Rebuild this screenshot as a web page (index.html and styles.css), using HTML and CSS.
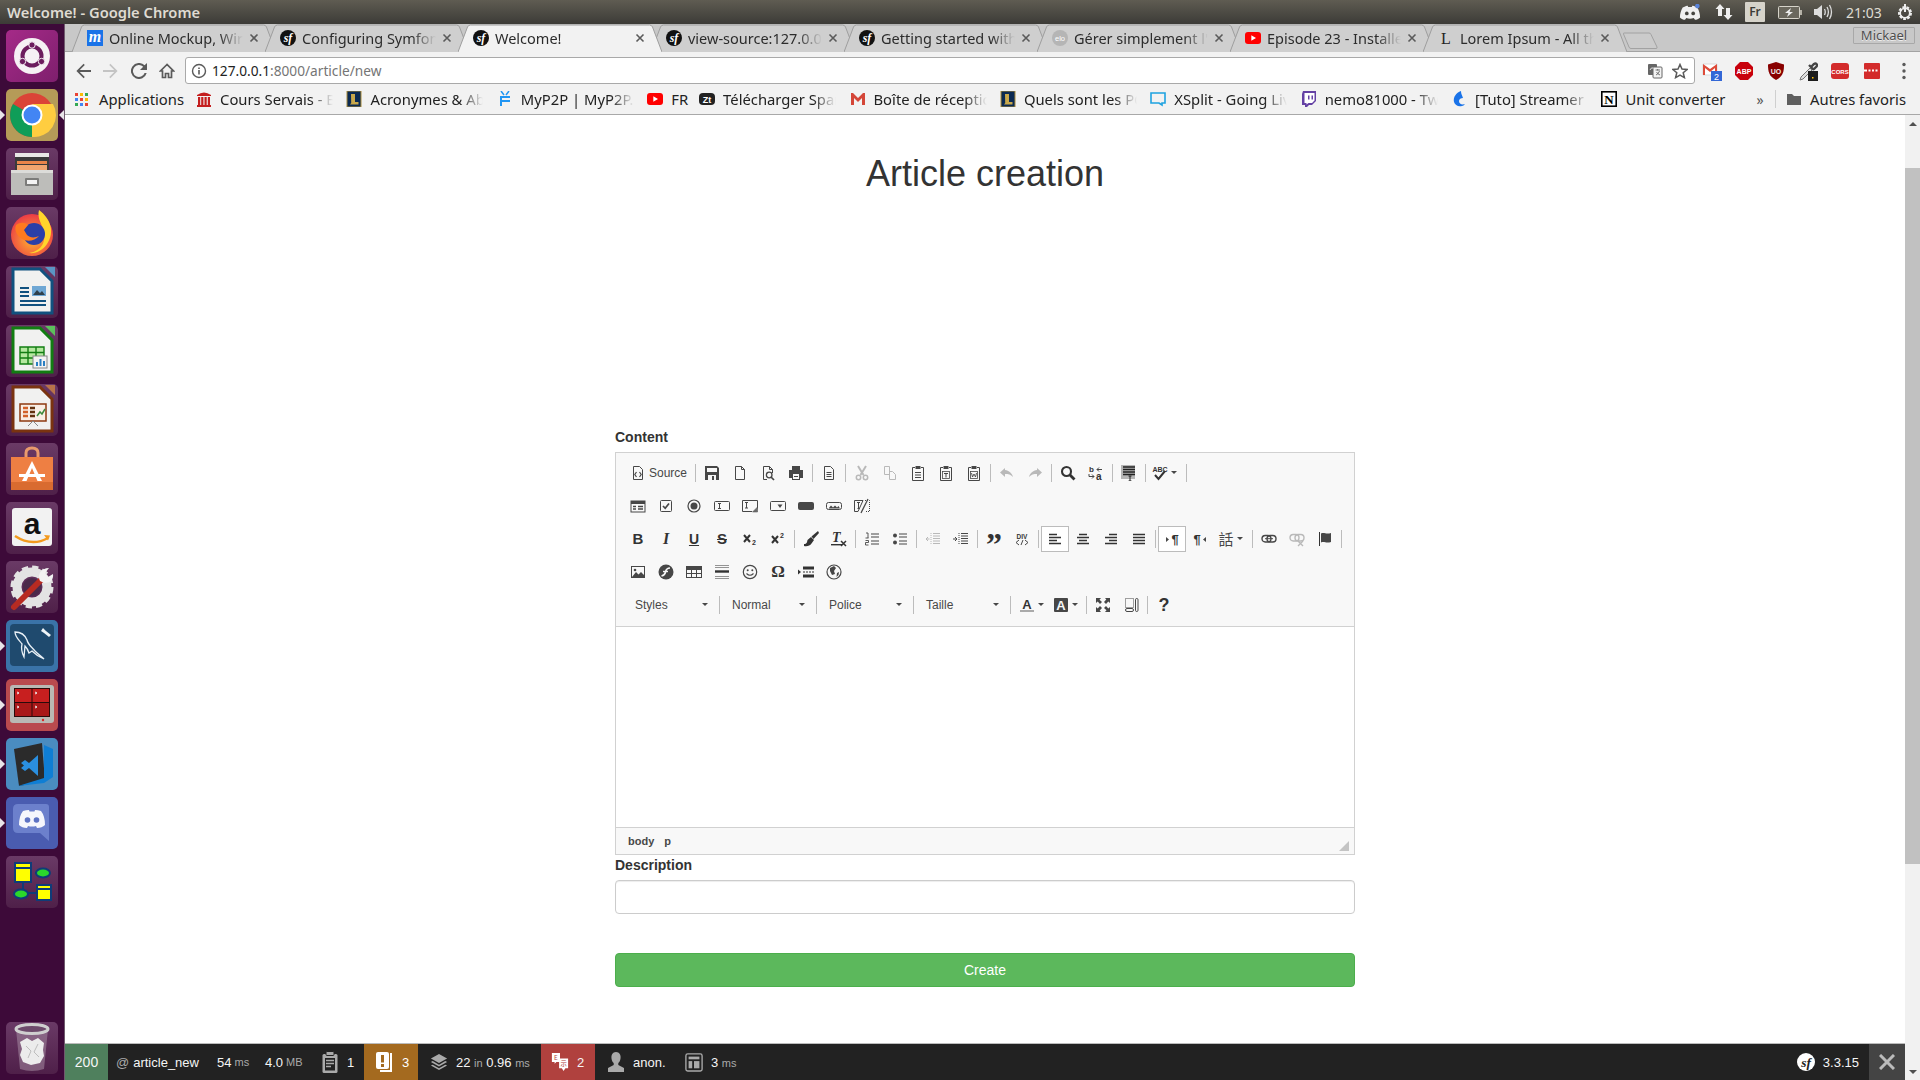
FILE: index.html
```html
<!DOCTYPE html>
<html lang="fr">
<head>
<meta charset="utf-8">
<title>Welcome!</title>
<link rel="stylesheet" href="styles.css">
</head>
<body>
<svg class="defs" aria-hidden="true">
  <symbol id="yt" viewBox="0 0 16 16"><rect x="0" y="2" width="16" height="12" rx="3" fill="#f00"/><path d="M6.3 5.2 11 8l-4.7 2.8z" fill="#fff"/></symbol>
  <symbol id="lol" viewBox="0 0 16 16"><rect x="1" y="0" width="14" height="16" fill="#0b2a52" stroke="#a78a3a"/><path d="M5 3h4v8h3.5v2.5H4l1.2-1.5z" fill="#c8a84b"/></symbol>
  <symbol id="x" viewBox="0 0 10 10"><path d="M1.5 1.5l7 7m0-7l-7 7" stroke="#5a5a5a" stroke-width="1.6" fill="none"/></symbol>
  <symbol id="tabshape" viewBox="0 0 204 28" preserveAspectRatio="none"><path d="M0 28 9.5 3Q10.3 1 12.5 1H191.500Q193.700 1 194.500 3L204 28"/></symbol>
</svg>
<div class="desktop">

  <header class="titlebar">
    <div class="win-title">Welcome! - Google Chrome</div>
    <div class="indicators">
      <svg class="ind ind-discord" viewBox="0 0 24 18"><path fill="#f0f0f0" d="M4 3.5C7 1.800 9 1.500 9.500 1.500L10 3h4l.5-1.500c.5 0 2.500.3 5.500 2 1.800 3 3 7 3 11-1.500 1.500-4 2.500-5.500 2.500L16 15c-2.500 1-5.500 1-8 0l-1.500 2C5 17 2.500 16 1 14.500c0-4 1.200-8 3-11z"/><circle cx="8.5" cy="10" r="2" fill="#45443f"/><circle cx="15.5" cy="10" r="2" fill="#45443f"/><circle cx="20" cy="2" r="2.5" fill="#5a83d8"/></svg>
      <svg class="ind ind-net" viewBox="0 0 18 18"><path fill="#eee" d="M5 1 0.5 6H3v7h4V6h2.500zM13 17l4.500-5H15V5h-4v7H8.500z"/></svg>
      <span class="ind-lang">Fr</span>
      <svg class="ind ind-batt" viewBox="0 0 24 13"><rect x=".5" y=".5" width="21" height="12" rx="1" fill="#6a675d" stroke="#d6d3ca"/><rect x="22" y="4" width="2" height="5" fill="#b5b2a8"/><path d="M13 2 7 7h3.500L9 11l6-5h-3.500z" fill="#eee"/></svg>
      <svg class="ind ind-vol" viewBox="0 0 20 18"><path fill="#ddd" d="M0 6h3l5-4v14l-5-4H0z"/><path fill="none" stroke="#ddd" stroke-width="1.3" d="M10.5 6q1.500 3 0 6M13 4q2.800 5 0 10M15.500 2q4 7 0 14"/></svg>
      <span class="clock">21:03</span>
      <svg class="ind ind-gear" viewBox="0 0 18 18"><circle cx="9" cy="10" r="5.5" fill="none" stroke="#eee" stroke-width="3" stroke-dasharray="2.5 1.3"/><circle cx="9" cy="10" r="4.8" fill="none" stroke="#eee" stroke-width="1.6"/><path d="M9 1v8" stroke="#eee" stroke-width="2"/></svg>
    </div>
  </header>

  <div class="workspace">
    <nav class="launcher">
      <div class="tile tile-ubuntu"><svg viewBox="0 0 52 52"><circle cx="26" cy="26" r="18" fill="#f6f0f4"/><circle cx="26" cy="26" r="9.5" fill="none" stroke="#6d1c5e" stroke-width="4"/><circle cx="26" cy="15" r="3.2" fill="#6d1c5e" stroke="#f6f0f4"/><circle cx="16.5" cy="31.500" r="3.2" fill="#6d1c5e" stroke="#f6f0f4"/><circle cx="35.5" cy="31.500" r="3.2" fill="#6d1c5e" stroke="#f6f0f4"/></svg></div>
      <div class="tile tile-chrome running active"><svg viewBox="0 0 52 52"><circle cx="26" cy="26" r="22" fill="#db4437"/><path d="M26 26 7 15A22 22 0 0 0 26 48z" fill="#0f9d58"/><path d="M26 26H48A22 22 0 0 1 26 48z" fill="#ffcd40"/><path d="M26 15H47A22 22 0 0 1 26 48L36 30z" fill="#ffcd40"/><circle cx="26" cy="26" r="10.5" fill="#fff"/><circle cx="26" cy="26" r="8.5" fill="#4285f4"/></svg></div>
      <div class="tile tile-plain"><svg viewBox="0 0 52 52"><path d="M9 5h34v8H9z" fill="#e8e8e6"/><rect x="9" y="9" width="34" height="14" fill="#3a3a3a"/><rect x="11" y="13" width="30" height="3" fill="#e8844a"/><rect x="11" y="17" width="30" height="5" fill="#f0a56f"/><rect x="5" y="22" width="42" height="25" fill="#bdbdba"/><rect x="5" y="22" width="42" height="3" fill="#dcdcd9"/><rect x="19" y="30" width="14" height="8" rx="1" fill="#7c7c7a"/><rect x="21" y="32" width="10" height="4" fill="#f3f3f3"/></svg></div>
      <div class="tile tile-plain"><svg viewBox="0 0 52 52"><defs><radialGradient id="ffg" cx=".5" cy=".6" r=".7"><stop offset="0" stop-color="#ffb52e"/><stop offset="1" stop-color="#e8264a"/></radialGradient></defs><circle cx="26" cy="28" r="21" fill="url(#ffg)"/><path d="M33 3c12 9 16 22 8 34-4 6-11 10-18 9 13-2 18-12 14-24-2-7-6-11-4-19z" fill="#ffd52c"/><circle cx="28" cy="27" r="11" fill="#2b3fa8"/><path d="M10 18c4-3 9-3 12 0l-4 5 3 5c3 3 8 3 12 1-4 5-12 6-17 3-5-3-8-9-6-14z" fill="#ff7a1f"/></svg></div>
      <div class="tile tile-plain"><svg viewBox="0 0 52 52"><path d="M39 1h10v10z" fill="#5b95c4"/><path d="M7 3h27l12 12v32H7z" fill="#f1f1f0" stroke="#11517f" stroke-width="3"/><path d="M14 22h9M14 26h9M14 30h9M14 35h26M14 39h26" stroke="#11517f" stroke-width="2.2"/><rect x="26" y="20" width="14" height="10" fill="#6fa7d4"/><path d="M27 29l4-5 3 3 2-2 3 4z" fill="#2f3f4a"/></svg></div>
      <div class="tile tile-plain"><svg viewBox="0 0 52 52"><path d="M39 1h10v10z" fill="#5cc05c"/><path d="M7 3h27l12 12v32H7z" fill="#f1f1f0" stroke="#127d12" stroke-width="3"/><path d="M14 22h24v17H14zM14 27.500h24M14 33h24M22 22v17M30 22v17" fill="#b5e8a0" stroke="#127d12" stroke-width="1.4"/><rect x="27" y="31" width="14" height="12" fill="#f3f3f3" stroke="#888"/><path d="M30 41v-4h2v4zM33.500 41v-7h2v7zM37 41v-5h2v5z" fill="#2a7fc2"/></svg></div>
      <div class="tile tile-plain"><svg viewBox="0 0 52 52"><path d="M39 1h10v10z" fill="#b8734a"/><path d="M7 3h27l12 12v32H7z" fill="#f1f1f0" stroke="#7a3310" stroke-width="3"/><rect x="14" y="20" width="26" height="17" fill="#f9efe6" stroke="#8d3a10" stroke-width="1.5"/><path d="M17 24h5M17 28h5M17 32h5" stroke="#d2622a" stroke-width="2.5"/><path d="M24 24h5M24 28h5M24 32h5" stroke="#62310f" stroke-width="2.5"/><path d="M31 32l3-4 2 2 3-5" stroke="#3d8b3d" stroke-width="1.5" fill="none"/><path d="M27 37l-5 5M27 37l5 5" stroke="#888"/></svg></div>
      <div class="tile tile-plain"><svg viewBox="0 0 52 52"><path d="M20 14V10q0-5 6-5t6 5v4" fill="none" stroke="#e89a6d" stroke-width="3"/><path d="M5 14h42v33H5z" fill="#ee7f43"/><path d="M5 39h42v8H5z" fill="#d96b30"/><path d="M26 18 16 38h4.500l5.500-13 5.500 13H36z" fill="#fff"/><rect x="13" y="31" width="26" height="3" fill="#fff"/></svg></div>
      <div class="tile tile-plain"><svg viewBox="0 0 52 52"><rect x="6" y="6" width="40" height="38" rx="3" fill="#f2f2f2"/><text x="26" y="32" text-anchor="middle" class="az">a</text><path d="M9 34q17 11 33 2" fill="none" stroke="#f39a1e" stroke-width="2.5"/><path d="M38 33l6 .5-2 5z" fill="#f39a1e"/></svg></div>
      <div class="tile tile-plain"><svg viewBox="0 0 52 52"><circle cx="26" cy="26" r="15" fill="none" stroke="#e3e3e3" stroke-width="9"/><circle cx="26" cy="26" r="19" fill="none" stroke="#e3e3e3" stroke-width="5" stroke-dasharray="6 3.9"/><circle cx="26" cy="26" r="9" fill="#4b2a4a"/><path d="M8 46 37 17" stroke="#b72b22" stroke-width="6" stroke-linecap="round"/><path d="M34 20c-3-6 1-13 9-13l-4 5 3 4 5-3c1 8-6 11-13 7z" fill="#f2f2f2"/></svg></div>
      <div class="tile tile-mysql running"><svg viewBox="0 0 52 52"><rect x="4" y="4" width="44" height="42" rx="4" fill="#1f4a6e"/><path d="M9 12c6 0 10 3 12 8 1 5 5 7 8 11 3 3 6 5 9 8-5-2-9-5-12-8l-3 2c-1-3-2-5-4-7l-1 11c-2-4-3-9-2-13-3-4-7-7-7-12z" fill="none" stroke="#e8f0f6" stroke-width="1.3"/><path d="M37 8l3 3 5 4-2 2-5-4-3-2z" fill="#eef4f8"/></svg></div>
      <div class="tile tile-terminal running"><svg viewBox="0 0 52 52"><rect x="4" y="6" width="44" height="38" rx="3" fill="#b9b9b4"/><rect x="8" y="9" width="36" height="29" fill="#2a0b0b"/><rect x="9" y="10" width="16.5" height="13" fill="#c81f1f"/><rect x="26.5" y="10" width="16.5" height="13" fill="#c81f1f"/><rect x="9" y="24" width="16.5" height="13" fill="#a91818"/><rect x="26.5" y="24" width="16.5" height="13" fill="#a91818"/><path d="M11 13l2 1-2 1M29 13l2 1-2 1M11 27l2 1-2 1M29 27l2 1-2 1" stroke="#eee" fill="none"/><circle cx="37" cy="41" r="1.2" fill="#d22"/></svg></div>
      <div class="tile tile-vscode running"><svg viewBox="0 0 52 52"><path d="M8 11 36 5l3 38-26 5z" fill="#2b2b2b"/><path d="M38 7l9 4v28l-9 6-26 3 26-8z" fill="#0f7ed4"/><path d="M15 25l4-3 4 3 9-8v21l-9-8-4 3-4-3 3-2.500z" fill="#2a8fe0"/></svg></div>
      <div class="tile tile-discord running"><svg viewBox="0 0 52 52"><path d="M12 7h28q3 0 3 3v34L34 36H12q-5 0-5-5V12q0-5 5-5z" fill="#6c80cc"/><path d="M17 14q3-1 6-1l.5 1.500h5L29 13q3 0 6 1 4 5 4 14-3 3-8 3l-1-2q-4 1-8 0l-1 2q-5 0-8-3 0-9 4-14z" fill="#f5f6fc"/><circle cx="21.5" cy="23" r="2.8" fill="#5d72c3"/><circle cx="30.5" cy="23" r="2.8" fill="#5d72c3"/></svg></div>
      <div class="tile tile-plain"><svg viewBox="0 0 52 52"><path d="M17 22v12M29 17h6M35 37H22" stroke="#0f3c78" stroke-width="2"/><rect x="9" y="7" width="16" height="19" fill="#ff0" stroke="#0f3c78" stroke-width="2"/><path d="M9 12h16" stroke="#0f3c78" stroke-width="2"/><ellipse cx="37" cy="17" rx="7" ry="4.5" fill="#2bd82b" stroke="#0f3c78" stroke-width="2"/><ellipse cx="15" cy="38" rx="7" ry="4.5" fill="#2bd82b" stroke="#0f3c78" stroke-width="2"/><rect x="31" y="29" width="14" height="15" fill="#ff0" stroke="#0f3c78" stroke-width="2"/><path d="M31 33h14" stroke="#0f3c78" stroke-width="2"/></svg></div>
      <div class="tile tile-plain tile-trash"><svg viewBox="0 0 52 52"><path d="M10 7l4 40q12 4 24 0l4-40q-16 6-32 0z" fill="#a58ca3" fill-opacity=".55"/><ellipse cx="26" cy="7" rx="16" ry="4.5" fill="#6d4a6b" stroke="#cfcfcf" stroke-width="3"/><path d="M14 20l7-4 5 3 6-3 6 5-1 7 1 6-4 7-9 2-8-3-3-7 2-6z" fill="#ececec"/><path d="M20 24l5 5-3 7M32 22l-4 8 5 5" fill="none" stroke="#bdbdbd"/></svg></div>
    </nav>

    <main class="browser">
      <div class="tabstrip">
        <div class="tab"><svg class="tab-shape"><use href="#tabshape"/></svg><svg class="fav" viewBox="0 0 16 16"><rect width="16" height="16" fill="#1a73e8"/><text x="8" y="12" text-anchor="middle" class="mock-text" fill="#fff">m</text></svg><span class="tab-title">Online Mockup, Wireframe</span><svg class="tab-x"><use href="#x"/></svg></div>
        <div class="tab"><svg class="tab-shape"><use href="#tabshape"/></svg><svg class="fav" viewBox="0 0 16 16"><circle cx="8" cy="8" r="8" fill="#111"/><text x="8" y="12" text-anchor="middle" class="sf-text" fill="#fff">sf</text></svg><span class="tab-title">Configuring Symfony</span><svg class="tab-x"><use href="#x"/></svg></div>
        <div class="tab tab-active"><svg class="tab-shape"><use href="#tabshape"/></svg><svg class="fav" viewBox="0 0 16 16"><circle cx="8" cy="8" r="8" fill="#111"/><text x="8" y="12" text-anchor="middle" class="sf-text" fill="#fff">sf</text></svg><span class="tab-title">Welcome!</span><svg class="tab-x"><use href="#x"/></svg></div>
        <div class="tab"><svg class="tab-shape"><use href="#tabshape"/></svg><svg class="fav" viewBox="0 0 16 16"><circle cx="8" cy="8" r="8" fill="#111"/><text x="8" y="12" text-anchor="middle" class="sf-text" fill="#fff">sf</text></svg><span class="tab-title">view-source:127.0.0.1:8000</span><svg class="tab-x"><use href="#x"/></svg></div>
        <div class="tab"><svg class="tab-shape"><use href="#tabshape"/></svg><svg class="fav" viewBox="0 0 16 16"><circle cx="8" cy="8" r="8" fill="#111"/><text x="8" y="12" text-anchor="middle" class="sf-text" fill="#fff">sf</text></svg><span class="tab-title">Getting started with CKE</span><svg class="tab-x"><use href="#x"/></svg></div>
        <div class="tab"><svg class="tab-shape"><use href="#tabshape"/></svg><svg class="fav" viewBox="0 0 16 16"><circle cx="8" cy="8" r="8" fill="#b5b5b5"/><text x="8" y="11" text-anchor="middle" class="elo-text" fill="#fff">elo</text></svg><span class="tab-title">Gérer simplement l'upload</span><svg class="tab-x"><use href="#x"/></svg></div>
        <div class="tab"><svg class="tab-shape"><use href="#tabshape"/></svg><svg class="fav"><use href="#yt"/></svg><span class="tab-title">Episode 23 - Installer</span><svg class="tab-x"><use href="#x"/></svg></div>
        <div class="tab"><svg class="tab-shape"><use href="#tabshape"/></svg><svg class="fav" viewBox="0 0 16 16"><text x="8" y="14" text-anchor="middle" class="lorem-text" fill="#222">L</text></svg><span class="tab-title">Lorem Ipsum - All the facts</span><svg class="tab-x"><use href="#x"/></svg></div>
        <svg class="newtab" viewBox="0 0 35 17"><path d="M1 1h25q1.500 0 2 1.500L34 15q.5 1.500-1 1.500H8q-1.500 0-2-1.500L.5 2Q.2 1 1 1z" fill="#cbcbcb" stroke="#a2a2a2"/></svg>
        <div class="profile">Mickael</div>
      </div>

      <div class="toolbar">
        <button class="nav-btn"><svg viewBox="0 0 16 16"><path fill="#5a5a5a" d="M16 7H4.800l5-5L8.600.8 1.400 8l7.200 7.200 1.200-1.200-5-5H16z"/></svg></button>
        <button class="nav-btn"><svg viewBox="0 0 16 16"><path fill="#c4c4c4" d="M0 7h11.200l-5-5L7.400.8 14.600 8l-7.200 7.200L6.200 14l5-5H0z"/></svg></button>
        <button class="nav-btn"><svg viewBox="0 0 16 16"><path fill="#5a5a5a" d="M13.600 2.300A8 8 0 1 0 15.700 10h-2.100a6 6 0 1 1-1.400-6.200L9 7h7V0z"/></svg></button>
        <button class="nav-btn"><svg viewBox="0 0 16 16"><path fill="none" stroke="#5a5a5a" stroke-width="1.7" d="M8 1.500 1.500 8H3.500v6.500h3v-4h3v4h3V8h2z"/></svg></button>
        <div class="urlbox">
          <svg class="url-ic" viewBox="0 0 16 16"><circle cx="8" cy="8" r="6.5" fill="none" stroke="#5a5a5a" stroke-width="1.4"/><path d="M7.200 7h1.600v4.500H7.200zM7.200 4.500h1.600v1.500H7.200z" fill="#5a5a5a"/></svg>
          <span class="url"><b>127.0.0.1</b>:8000/article/new</span>
          <svg class="url-ic" viewBox="0 0 16 16"><rect x="1" y="1" width="9" height="11" rx="1" fill="#666"/><rect x="6" y="4" width="9" height="11" rx="1" fill="#f3f3f3" stroke="#666"/><path d="M3 7q1-3 3.500-2" stroke="#fff" stroke-width=".8" fill="none"/><path d="M8.500 7h4.500M10.700 6v1.500M9 12q2.500-1 3.500-4M9.500 9q1 2 3.500 3" stroke="#555" stroke-width=".8" fill="none"/></svg>
          <svg class="url-ic" viewBox="0 0 16 16"><path fill="none" stroke="#5a5a5a" stroke-width="1.5" d="M8 1.500l2 4.600 5 .4-3.800 3.200 1.200 4.900L8 12l-4.400 2.600 1.200-4.900L1 6.500l5-.4z"/></svg>
        </div>
        <div class="ext"><svg viewBox="0 0 20 20"><path d="M1 3h14v11H1z" fill="#fff" stroke="#d9d9d9"/><path d="M1 3v11h2V7l5 4 5-4v7h2V3L8 8z" fill="#dd4b39"/><rect x="9" y="10" width="11" height="10" fill="#3367d6"/><text x="14.5" y="18.500" text-anchor="middle" class="badge-text">2</text></svg></div>
        <div class="ext"><svg viewBox="0 0 20 20"><path d="M6 1h8l5 5v8l-5 5H6l-5-5V6z" fill="#c8000c"/><text x="10" y="13" text-anchor="middle" class="abp-text">ABP</text></svg></div>
        <div class="ext"><svg viewBox="0 0 20 20"><path d="M10 1 2 3.500c0 7 1 12 8 15.500 7-3.500 8-8.500 8-15.500z" fill="#800"/><text x="10" y="12.500" text-anchor="middle" class="ub-text">UO</text></svg></div>
        <div class="ext"><svg viewBox="0 0 20 20"><path d="M12 7 3 16l-1 3 3-1 9-9z" fill="#dfdfdf" stroke="#777"/><path d="M11 4l5 5M13 6l3-3q1.500-1 2.500 0t0 2.500l-3 3" stroke="#444" stroke-width="2.4" fill="none"/><rect x="10" y="10" width="10" height="10" fill="#1c1c1c"/><rect x="14" y="16" width="1.5" height="1.5" fill="#ffc107"/></svg></div>
        <div class="ext"><svg viewBox="0 0 20 20"><rect x="1" y="2" width="18" height="16" rx="3" fill="#d32b2b"/><text x="10" y="12.500" text-anchor="middle" class="cors-text">CORS</text></svg></div>
        <div class="ext"><svg viewBox="0 0 20 20"><rect x="2" y="2" width="16" height="16" rx="1" fill="#d32b2b"/><path d="M2 9.500h3M6.500 9.500h2M10 9.500h2M13.500 9.500h2" stroke="#fff" stroke-width="2"/></svg></div>
        <div class="ext"><svg viewBox="0 0 20 20"><circle cx="10" cy="3.500" r="1.7" fill="#5a5a5a"/><circle cx="10" cy="10" r="1.7" fill="#5a5a5a"/><circle cx="10" cy="16.500" r="1.7" fill="#5a5a5a"/></svg></div>
      </div>

      <div class="bookmarks">
        <div class="bm bm-apps"><svg class="fav" viewBox="0 0 16 16"><g><rect x="2" y="2" width="3" height="3" fill="#ea4335"/><rect x="7" y="2" width="3" height="3" fill="#fbbc05"/><rect x="12" y="2" width="3" height="3" fill="#34a853"/><rect x="2" y="7" width="3" height="3" fill="#4285f4"/><rect x="7" y="7" width="3" height="3" fill="#ea4335"/><rect x="12" y="7" width="3" height="3" fill="#fbbc05"/><rect x="2" y="12" width="3" height="3" fill="#34a853"/><rect x="7" y="12" width="3" height="3" fill="#4285f4"/><rect x="12" y="12" width="3" height="3" fill="#ea4335"/></g></svg><span>Applications</span></div>
        <div class="bm"><svg class="fav" viewBox="0 0 16 16"><path d="M1 4q7-5 14 0v1H1zM2 6h2.200v8H2zM5.200 6h2.200v8H5.200zM8.500 6h2.200v8H8.500zM11.800 6H14v8h-2.200zM1 14h14v2H1z" fill="#c41e1e"/></svg><span class="fade">Cours Servais - Espace</span></div>
        <div class="bm"><svg class="fav"><use href="#lol"/></svg><span class="fade">Acronymes &amp; Abréviations</span></div>
        <div class="bm"><svg class="fav" viewBox="0 0 16 16"><path d="M4 0l3 4M12 0L9 4" stroke="#2196f3" stroke-width="1.5"/><path d="M3 5h10v2H5v2h8v2H5v4H3z" fill="#2196f3"/></svg><span class="fade">MyP2P | MyP2P.eu</span></div>
        <div class="bm bm-short"><svg class="fav"><use href="#yt"/></svg><span>FR</span></div>
        <div class="bm"><svg class="fav" viewBox="0 0 16 16"><rect x="0" y="2" width="16" height="12" rx="4" fill="#222"/><text x="8" y="12" text-anchor="middle" class="zt-text">Zt</text></svg><span class="fade">Télécharger Spartacus</span></div>
        <div class="bm"><svg class="fav" viewBox="0 0 16 16"><path d="M1 2h2l5 5 5-5h2v12h-3V7L8 11 4 7v7H1z" fill="#d44638"/></svg><span class="fade">Boîte de réception</span></div>
        <div class="bm"><svg class="fav"><use href="#lol"/></svg><span class="fade">Quels sont les PC gamer</span></div>
        <div class="bm"><svg class="fav" viewBox="0 0 16 16"><path d="M1 2h14v10h-3v2l-3-2H1z" fill="none" stroke="#1ea2e0" stroke-width="1.6"/></svg><span class="fade">XSplit - Going Live</span></div>
        <div class="bm"><svg class="fav" viewBox="0 0 16 16"><path d="M2 0h13v10l-4 4H8l-2 2H4v-2H1V3z" fill="#6441a4"/><path d="M3.500 2h10v7.500L11 12H7.500l-2 1.500V12h-2z" fill="#fff"/><path d="M7 4.500h1.500v4H7zM10.500 4.500H12v4h-1.500z" fill="#6441a4"/></svg><span class="fade">nemo81000 - Twitch</span></div>
        <div class="bm"><svg class="fav" viewBox="0 0 16 16"><path d="M10 0C5 2 2 6 3 11c1 3 4 5 8 4 1 0 2-1 3-2-3 1-6 0-6-3 0-2 2-3 4-3-1-3-2-4-2-7z" fill="#1a73e8"/></svg><span class="fade">[Tuto] Streamer un jeu</span></div>
        <div class="bm bm-last"><svg class="fav" viewBox="0 0 16 16"><rect x=".8" y=".8" width="14.4" height="14.4" fill="#fff" stroke="#000" stroke-width="1.6"/><text x="8" y="12.500" text-anchor="middle" class="n-text">N</text></svg><span>Unit converter</span></div>
        <div class="bm-right">
          <span class="chev">»</span>
          <span class="bm-sep"></span>
          <svg class="fav" viewBox="0 0 16 16"><path d="M1 3h5l2 2h7v9H1z" fill="#5f5f5f"/></svg>
          <span class="bm-other">Autres favoris</span>
        </div>
      </div>

      <div class="viewport">
        <div class="page">
          <div class="page-content">
            <h1>Article creation</h1>
            <form class="article-form">
              <label class="lbl lbl-content">Content</label>
              <div class="cke">
                <div class="cke-top">
                  <div class="row">
                    <div class="btn btn-source"><svg class="ic" viewBox="0 0 16 16"><path d="M3.500 1.500h6l3 3v10h-9z" fill="none" stroke="#474747"/><path d="M6.500 7 4.800 9.500l1.700 2.500M9.500 7l1.700 2.500L9.500 12" fill="none" stroke="#474747" stroke-width="1.2"/></svg><span>Source</span></div>
                    <i class="sep"></i>
                    <div class="btn"><svg class="ic" viewBox="0 0 16 16"><path d="M1 1h12l2 2v12H1z" fill="#474747"/><rect x="3" y="3" width="10" height="4" fill="#f8f8f8"/><rect x="4" y="10" width="8" height="5" fill="#f8f8f8"/><rect x="8" y="11" width="2" height="4" fill="#474747"/></svg></div>
                    <div class="btn"><svg class="ic" viewBox="0 0 16 16"><path d="M3.500 1.500h6l3 3v10h-9zM9.500 1.500v3h3" fill="none" stroke="#474747"/></svg></div>
                    <div class="btn"><svg class="ic" viewBox="0 0 16 16"><path d="M7 14.500H3.500v-13h6l3 3V8M9.500 1.500v3h3" fill="none" stroke="#474747"/><circle cx="9.2" cy="10" r="2.8" fill="none" stroke="#474747" stroke-width="1.3"/><path d="M11 12l3 3" stroke="#474747" stroke-width="1.7"/></svg></div>
                    <div class="btn"><svg class="ic" viewBox="0 0 16 16"><path d="M4 1h8v4H4zM1 5h14v8h-3v2H4v-2H1z" fill="#474747"/><rect x="5" y="9" width="6" height="5" fill="#f8f8f8"/><rect x="6" y="11" width="4" height="1" fill="#474747"/></svg></div>
                    <i class="sep"></i>
                    <div class="btn"><svg class="ic" viewBox="0 0 16 16"><path d="M3.500 1.500h6l3 3v10h-9zM5.500 7.500h5M5.500 9.500h5M5.500 11.500h5" fill="none" stroke="#474747"/></svg></div>
                    <i class="sep"></i>
                    <div class="btn btn-off"><svg class="ic" viewBox="0 0 16 16"><path d="M4 1l5.500 9M12 1 6.500 10" stroke="#474747" stroke-width="2" fill="none"/><circle cx="4.5" cy="12.500" r="2.2" fill="none" stroke="#474747" stroke-width="1.5"/><circle cx="11.5" cy="12.500" r="2.2" fill="none" stroke="#474747" stroke-width="1.5"/></svg></div>
                    <div class="btn btn-off"><svg class="ic" viewBox="0 0 16 16"><path d="M2.500 1.500h5v8h-5zM7.500 6.500h3l3 3v5h-6z" fill="#f8f8f8" stroke="#474747"/></svg></div>
                    <div class="btn"><svg class="ic" viewBox="0 0 16 16"><path d="M5 2.500H2.500v13h11v-13H11" fill="none" stroke="#474747"/><rect x="5.5" y="1" width="5" height="3" fill="#474747"/><path d="M5 7.500h6M5 10h6M5 12.500h6" stroke="#474747"/></svg></div>
                    <div class="btn"><svg class="ic" viewBox="0 0 16 16"><path d="M5 2.500H2.500v13h11v-13H11" fill="none" stroke="#474747"/><rect x="5.5" y="1" width="5" height="3" fill="#474747"/><rect x="4.5" y="6.500" width="7" height="7" fill="none" stroke="#474747" stroke-width=".8"/><path d="M6 8.500h4M8 8.500v4" stroke="#474747"/></svg></div>
                    <div class="btn"><svg class="ic" viewBox="0 0 16 16"><path d="M5 2.500H2.500v13h11v-13H11" fill="none" stroke="#474747"/><rect x="5.5" y="1" width="5" height="3" fill="#474747"/><rect x="4.5" y="6.500" width="7" height="7" fill="none" stroke="#474747" stroke-width=".8"/><path d="M5.500 8l1 4 1.500-3 1.500 3 1-4" stroke="#474747" fill="none" stroke-width=".9"/></svg></div>
                    <i class="sep"></i>
                    <div class="btn btn-off"><svg class="ic" viewBox="0 0 16 16"><path d="M6 3 1 7.500 6 12V9c3.500 0 5.500.5 8 3-1-4-4-6.500-8-7z" fill="#474747"/></svg></div>
                    <div class="btn btn-off"><svg class="ic" viewBox="0 0 16 16"><path d="M10 3l5 4.500L10 12V9c-3.500 0-5.500.5-8 3 1-4 4-6.500 8-7z" fill="#474747"/></svg></div>
                    <i class="sep"></i>
                    <div class="btn"><svg class="ic" viewBox="0 0 16 16"><circle cx="6.5" cy="6.500" r="4.5" fill="none" stroke="#333" stroke-width="2.1"/><path d="M10 10l4.500 4.500" stroke="#333" stroke-width="2.8"/></svg></div>
                    <div class="btn"><svg class="ic" viewBox="0 0 16 16"><text x="1" y="7" class="ic-txt-s">b</text><text x="8" y="15" class="ic-txt-m">a</text><path d="M14 4.500H9M11 2.500 9 4.500l2 2M1 9v2.500h5M4 9.500l2 2-2 2" fill="none" stroke="#474747"/></svg></div>
                    <i class="sep"></i>
                    <div class="btn"><svg class="ic" viewBox="0 0 16 16"><rect x="0" y="0" width="14" height="14" fill="#b5b5b5"/><path d="M2 2h12M2 4.500h12M2 7h12M2 9.500h12" stroke="#222" stroke-width="1.3"/><path d="M9 11v5M7.500 11h3M7.500 16h3" stroke="#222"/></svg></div>
                    <i class="sep"></i>
                    <div class="btn btn-arrow"><svg class="ic" viewBox="0 0 16 16"><text x="8" y="7" text-anchor="middle" class="ic-txt-abc">ABC</text><path d="M3 10l3.500 4L13 6" fill="none" stroke="#333" stroke-width="2"/></svg><b class="caret"></b></div>
                    <i class="sep"></i>
                  </div>
                  <div class="row">
                    <div class="btn"><svg class="ic" viewBox="0 0 16 16"><rect x="1" y="3" width="14" height="11" fill="none" stroke="#474747"/><rect x="1" y="3" width="14" height="3" fill="#474747"/><path d="M3 8.500h3M3 11h3M8 8.500h5M8 11h5" stroke="#474747" stroke-width="1.3"/></svg></div>
                    <div class="btn"><svg class="ic" viewBox="0 0 16 16"><rect x="2.5" y="2.500" width="11" height="11" rx="1" fill="none" stroke="#474747"/><path d="M5 8l2.200 2.300L11 5.500" fill="none" stroke="#474747" stroke-width="1.7"/></svg></div>
                    <div class="btn"><svg class="ic" viewBox="0 0 16 16"><circle cx="8" cy="8" r="6" fill="none" stroke="#474747" stroke-width="1.2"/><circle cx="8" cy="8" r="3.5" fill="#474747"/></svg></div>
                    <div class="btn"><svg class="ic" viewBox="0 0 16 16"><rect x=".5" y="3.500" width="15" height="9" rx="1" fill="none" stroke="#474747"/><path d="M4 5.500h3M4 10.500h3M5.500 5.500v5" stroke="#474747"/></svg></div>
                    <div class="btn"><svg class="ic" viewBox="0 0 16 16"><path d="M.5 2.500h15v8M10 13.500H.5v-11" fill="none" stroke="#474747"/><path d="M3 4.500h3M3 10h3M4.500 4.500V10" stroke="#474747"/><path d="M15.500 9v5h-5zM13 13.500l2-2" fill="#777" stroke="#474747" stroke-width=".5"/></svg></div>
                    <div class="btn"><svg class="ic" viewBox="0 0 16 16"><rect x=".5" y="3.500" width="15" height="9" rx="1" fill="none" stroke="#474747"/><path d="M7.500 6.500h5L10 10z" fill="#474747"/></svg></div>
                    <div class="btn"><svg class="ic" viewBox="0 0 16 16"><rect x="0" y="4" width="16" height="8" rx="2" fill="#474747"/></svg></div>
                    <div class="btn"><svg class="ic" viewBox="0 0 16 16"><rect x=".5" y="4.500" width="15" height="7" rx="2" fill="none" stroke="#474747"/><path d="M2.500 10.500l2.500-3 2 2 2-2 2 2 1.500-1.500 1.500 2.500z" fill="#474747"/></svg></div>
                    <div class="btn"><svg class="ic" viewBox="0 0 16 16"><path d="M.5 2.500H9l-5 11H.5z" fill="none" stroke="#474747"/><path d="M3 4.500h3M3.500 10.500h2M4.500 4.500v6" stroke="#474747"/><path d="M14 1 7 15" stroke="#474747" stroke-width="1.3"/><path d="M11 2.500h4.500v11H11" fill="none" stroke="#474747" stroke-dasharray="1 1"/></svg></div>
                  </div>
                  <div class="row">
                    <div class="btn"><span class="g g-b">B</span></div>
                    <div class="btn"><span class="g g-i">I</span></div>
                    <div class="btn"><span class="g g-u">U</span></div>
                    <div class="btn"><span class="g g-s">S</span></div>
                    <div class="btn"><svg class="ic" viewBox="0 0 16 16"><path d="M2 4l6 7M8 4l-6 7" stroke="#333" stroke-width="2"/><text x="10" y="14" class="ic-txt-2">2</text></svg></div>
                    <div class="btn"><svg class="ic" viewBox="0 0 16 16"><path d="M2 5l6 7M8 5l-6 7" stroke="#333" stroke-width="2"/><text x="10" y="7" class="ic-txt-2">2</text></svg></div>
                    <i class="sep"></i>
                    <div class="btn"><svg class="ic" viewBox="0 0 16 16"><path d="M15 0 8.500 5.500l2 2.500L16 2z" fill="#333"/><path d="M1 13c3 0 3-2 3.500-4L8 6l3 3-2.500 3.500c-1.500 2.500-4.500 3-7.500 2.500z" fill="#333"/></svg></div>
                    <div class="btn"><svg class="ic" viewBox="0 0 16 16"><text x="1" y="11" class="ic-txt-t">T</text><rect x="0" y="13" width="11" height="1.4" fill="#333"/><path d="M10 10l5 5M15 10l-5 5" stroke="#333" stroke-width="1.5"/></svg></div>
                    <i class="sep"></i>
                    <div class="btn"><svg class="ic" viewBox="0 0 16 16"><path d="M7 3h8M7 6h8M7 10h8M7 13h8" stroke="#474747"/><path d="M2 2h2v5M1.500 7h3M1.500 9.500h3v2h-3v2.500h3" stroke="#474747" fill="none" stroke-width=".9"/></svg></div>
                    <div class="btn"><svg class="ic" viewBox="0 0 16 16"><circle cx="3" cy="4.500" r="2" fill="#474747"/><circle cx="3" cy="11.500" r="2" fill="#474747"/><path d="M7 3h8M7 6h8M7 10h8M7 13h8" stroke="#474747"/></svg></div>
                    <i class="sep"></i>
                    <div class="btn btn-off"><svg class="ic" viewBox="0 0 16 16"><path d="M6 2v12" stroke="#474747" stroke-dasharray="1 1"/><path d="M8 2.500h7M8 5h7M8 7.500h7M8 10h7M8 12.500h7M1 8h3.500M3 6 1 8l2 2" fill="none" stroke="#474747"/></svg></div>
                    <div class="btn"><svg class="ic" viewBox="0 0 16 16"><path d="M6 2v12" stroke="#474747" stroke-dasharray="1 1"/><path d="M8 2.500h7M8 5h7M8 7.500h7M8 10h7M8 12.500h7M0 8h3.500M2 6l2 2-2 2" fill="none" stroke="#474747"/></svg></div>
                    <i class="sep"></i>
                    <div class="btn"><span class="g g-q">”</span></div>
                    <div class="btn"><svg class="ic" viewBox="0 0 16 16"><text x="8" y="7.500" text-anchor="middle" class="ic-txt-div">DIV</text><path d="M5 9l-3 2.500L5 14M11 9l3 2.500L11 14M9 9l-2 5" fill="none" stroke="#474747"/></svg></div>
                    <i class="sep"></i>
                    <div class="btn btn-on"><svg class="ic" viewBox="0 0 16 16"><path d="M2 3.500h8M2 6.500h12M2 9.500h8M2 12.500h12" stroke="#333" stroke-width="1.6"/></svg></div>
                    <div class="btn"><svg class="ic" viewBox="0 0 16 16"><path d="M4 3.500h8M2 6.500h12M4 9.500h8M2 12.500h12" stroke="#333" stroke-width="1.6"/></svg></div>
                    <div class="btn"><svg class="ic" viewBox="0 0 16 16"><path d="M6 3.500h8M2 6.500h12M6 9.500h8M2 12.500h12" stroke="#333" stroke-width="1.6"/></svg></div>
                    <div class="btn"><svg class="ic" viewBox="0 0 16 16"><path d="M2 3.500h12M2 6.500h12M2 9.500h12M2 12.500h12" stroke="#333" stroke-width="1.6"/></svg></div>
                    <i class="sep"></i>
                    <div class="btn btn-on"><svg class="ic" viewBox="0 0 16 16"><path d="M2 6l3 2.500L2 11z" fill="#474747"/><text x="11" y="13" text-anchor="middle" class="ic-txt-p">¶</text></svg></div>
                    <div class="btn"><svg class="ic" viewBox="0 0 16 16"><path d="M14 6l-3 2.500 3 2.500z" fill="#474747"/><text x="5" y="13" text-anchor="middle" class="ic-txt-p">¶</text></svg></div>
                    <div class="btn btn-arrow"><svg class="ic" viewBox="0 0 16 16"><text x="8" y="14" text-anchor="middle" class="ic-txt-cjk">話</text></svg><b class="caret"></b></div>
                    <i class="sep"></i>
                    <div class="btn"><svg class="ic" viewBox="0 0 16 16"><rect x="1" y="4.500" width="9" height="6.500" rx="3.200" fill="none" stroke="#474747" stroke-width="1.4"/><rect x="6" y="4.500" width="9" height="6.500" rx="3.200" fill="none" stroke="#474747" stroke-width="1.4"/><path d="M4 7.700h8" stroke="#474747"/></svg></div>
                    <div class="btn btn-off"><svg class="ic" viewBox="0 0 16 16"><rect x="1" y="3.500" width="9" height="6.500" rx="3.200" fill="none" stroke="#474747" stroke-width="1.4"/><rect x="6" y="3.500" width="9" height="6.500" rx="3.200" fill="none" stroke="#474747" stroke-width="1.4"/><path d="M9 10l5 5M14 10l-5 5" stroke="#474747" stroke-width="1.4"/></svg></div>
                    <div class="btn"><svg class="ic" viewBox="0 0 16 16"><path d="M2.500 1v14" stroke="#333"/><path d="M4 2.500c3-1.500 5 1 10-.5v9c-5 1.500-7-1-10 .5z" fill="#474747"/></svg></div>
                    <i class="sep"></i>
                  </div>
                  <div class="row">
                    <div class="btn"><svg class="ic" viewBox="0 0 16 16"><rect x="1" y="2" width="14" height="12" fill="#474747"/><rect x="2" y="3" width="12" height="10" fill="#f8f8f8"/><circle cx="5" cy="6" r="1.3" fill="#474747"/><path d="M2 13l4-5 2.500 2.500L11 8l3 3v2z" fill="#474747"/></svg></div>
                    <div class="btn"><svg class="ic" viewBox="0 0 16 16"><circle cx="8" cy="8" r="7.5" fill="#474747"/><path d="M12 4c-3 0-4 1.500-4.500 4s-2 3.500-4 4" fill="none" stroke="#f8f8f8" stroke-width="1.6"/><path d="M5 7.500h5" stroke="#f8f8f8" stroke-width="1.4"/></svg></div>
                    <div class="btn"><svg class="ic" viewBox="0 0 16 16"><rect x=".5" y="2.500" width="15" height="11" fill="none" stroke="#474747"/><rect x="1" y="3" width="14" height="3" fill="#474747"/><path d="M1 9.500h14M5.500 6v7M10.500 6v7" stroke="#474747"/></svg></div>
                    <div class="btn"><svg class="ic" viewBox="0 0 16 16"><path d="M1 1.500h14M1 3.500h14M1 14.500h14M1 12.500h14" stroke="#888" stroke-width=".9"/><path d="M1 7.500h14" stroke="#333" stroke-width="2.4"/></svg></div>
                    <div class="btn"><svg class="ic" viewBox="0 0 16 16"><circle cx="8" cy="8" r="6.7" fill="none" stroke="#474747" stroke-width="1.2"/><circle cx="5.7" cy="6.200" r="1" fill="#474747"/><circle cx="10.3" cy="6.200" r="1" fill="#474747"/><path d="M4.500 9.500q3.500 3.500 7 0" fill="none" stroke="#474747" stroke-width="1.1"/></svg></div>
                    <div class="btn"><span class="g g-o">Ω</span></div>
                    <div class="btn"><svg class="ic" viewBox="0 0 16 16"><path d="M0 5.500l3 2.500-3 2.500z" fill="#333"/><rect x="5" y="2.500" width="11" height="3" fill="#333"/><rect x="5" y="10.500" width="11" height="3" fill="#333"/><path d="M5 8h11" stroke="#333" stroke-dasharray="2 1"/></svg></div>
                    <div class="btn"><svg class="ic" viewBox="0 0 16 16"><circle cx="8" cy="8" r="7" fill="none" stroke="#474747" stroke-width="1.2"/><path d="M4 4l4-2 2 2-2 3 1 3-3 1-2-4zM11 9l2-1-.5 3-2 2z" fill="#474747"/></svg></div>
                  </div>
                  <div class="row row-combo">
                    <div class="combo"><span>Styles</span><b class="caret"></b></div>
                    <i class="sep"></i>
                    <div class="combo"><span>Normal</span><b class="caret"></b></div>
                    <i class="sep"></i>
                    <div class="combo"><span>Police</span><b class="caret"></b></div>
                    <i class="sep"></i>
                    <div class="combo"><span>Taille</span><b class="caret"></b></div>
                    <i class="sep"></i>
                    <div class="btn btn-color"><svg class="ic" viewBox="0 0 16 16"><text x="8" y="11.500" text-anchor="middle" class="ic-txt-a">A</text><rect x="1" y="13" width="14" height="2" fill="#aaa"/></svg><b class="caret"></b></div>
                    <div class="btn btn-bg"><svg class="ic" viewBox="0 0 16 16"><rect x="1" y="1" width="14" height="14" rx="1" fill="#474747"/><text x="8" y="12.500" text-anchor="middle" class="ic-txt-a ic-txt-w">A</text></svg><b class="caret"></b></div>
                    <i class="sep"></i>
                    <div class="btn"><svg class="ic" viewBox="0 0 16 16"><path d="M1 1h5L4.500 2.700 7 5 5 7 2.700 4.500 1 6zM15 1v5l-1.700-1.500L11 7 9 5l2.300-2.500L10 1zM1 15v-5l1.700 1.500L5 9l2 2-2.300 2.500L6 15zM15 15h-5l1.500-1.700L9 11l2-2 2.300 2.500L15 10z" fill="#474747"/></svg></div>
                    <div class="btn"><svg class="ic" viewBox="0 0 16 16"><rect x="2.5" y="1.500" width="8" height="9" fill="none" stroke="#474747" stroke-dasharray="1 1"/><rect x="2.5" y="11.500" width="8" height="3" rx="1.500" fill="none" stroke="#474747"/><rect x="12.5" y="1.500" width="2.500" height="13" rx="1.200" fill="none" stroke="#474747"/></svg></div>
                    <i class="sep"></i>
                    <div class="btn"><span class="g g-h">?</span></div>
                  </div>
                </div>
                <div class="cke-body"></div>
                <div class="cke-status">
                  <span class="crumb">body</span><span class="crumb">p</span>
                  <svg class="resizer" viewBox="0 0 10 10"><path d="M10 0v10H0z" fill="#c4c4c4"/></svg>
                </div>
              </div>
              <label class="lbl">Description</label>
              <div class="input"></div>
              <button class="create" type="button">Create</button>
            </form>
          </div>

          <footer class="sf-toolbar">
            <div class="sf-block sf-status">200</div>
            <div class="sf-block sf-route"><span class="lab">@</span> <span>article_new</span></div>
            <div class="sf-block sf-time">54 <span class="lab">ms</span></div>
            <div class="sf-block sf-mem">4.0 <span class="lab">MB</span></div>
            <div class="sf-block sf-logs"><svg class="sf-ic" viewBox="0 0 18 24"><path d="M3 4h12q1.500 0 1.500 1.500v16q0 1.500-1.500 1.500H3q-1.500 0-1.500-1.500v-16Q1.500 4 3 4z" fill="#aaa"/><rect x="5" y="1.500" width="8" height="4" rx="1" fill="#aaa" stroke="#222"/><rect x="4" y="8" width="10" height="12.500" fill="#222"/><path d="M5 10.500h8M5 13.500h8M5 16.500h5" stroke="#aaa" stroke-width="1.5"/></svg><span>1</span></div>
            <div class="sf-block sf-warn"><svg class="sf-ic" viewBox="0 0 18 24"><path d="M15 3h2v19H5v-2h10z" fill="#fff"/><rect x="1" y="2" width="13" height="17" rx="2" fill="#fff"/><path d="M6 5h3v7.500H6zM6 14h3v3H6z" fill="#a46a1f"/></svg><span>3</span></div>
            <div class="sf-block sf-form"><svg class="sf-ic" viewBox="0 0 20 24"><path d="M10 3 19 8l-9 5-9-5zM1 12l2-1 7 4 7-4 2 1-9 5zM1 16l2-1 7 4 7-4 2 1-9 5z" fill="#aaa"/></svg><span>22 <span class="lab">in</span> 0.96 <span class="lab">ms</span></span></div>
            <div class="sf-block sf-err"><svg class="sf-ic sf-ic-w" viewBox="0 0 20 24"><path d="M1 2h9v10H6l-2 2v-2H1z" fill="#fff"/><path d="M9 8h10v11h-3l-2 3-2-3H9z" fill="#fff"/><text x="5.5" y="9.500" text-anchor="middle" class="sf-mini">E</text><text x="14" y="17" text-anchor="middle" class="sf-mini">示</text></svg><span>2</span></div>
            <div class="sf-block sf-user"><svg class="sf-ic" viewBox="0 0 18 24"><path d="M9 2c3.500 0 5 3 4.500 6.500-.3 2-1 3.500-2.200 4.500v2L17 18v4H1v-4l5.700-3v-2C5.500 12 4.800 10.500 4.500 8.500 4 5 5.500 2 9 2z" fill="#aaa"/></svg><span>anon.</span></div>
            <div class="sf-block sf-tpl"><svg class="sf-ic" viewBox="0 0 20 24"><rect x="1" y="3" width="18" height="19" rx="2" fill="none" stroke="#aaa" stroke-width="1.5"/><rect x="4" y="6" width="12" height="3" fill="#aaa"/><rect x="4" y="11" width="4" height="8" fill="#aaa"/><rect x="10" y="11" width="6" height="8" fill="#aaa"/></svg><span>3 <span class="lab">ms</span></span></div>
            <div class="sf-version"><svg class="sf-logo" viewBox="0 0 16 16"><circle cx="8" cy="8" r="8" fill="#fff"/><text x="8" y="12" text-anchor="middle" class="sf-text" fill="#222">sf</text></svg><span>3.3.15</span></div>
            <div class="sf-close"><svg viewBox="0 0 16 16"><path d="M1 1l14 14m0-14L1 15" stroke="#bbb" stroke-width="3"/></svg></div>
          </footer>
        </div>
        <aside class="scrollbar">
          <div class="sb-btn"><i class="sb-up"></i></div>
          <div class="sb-track"><div class="sb-thumb"></div></div>
          <div class="sb-btn"><i class="sb-down"></i></div>
        </aside>
      </div>
    </main>
  </div>
</div>
</body>
</html>
```

FILE: styles.css
```css
* { box-sizing: border-box; }
html, body { margin: 0; padding: 0; }
body { font-family: "Liberation Sans", Arial, sans-serif; background: #fff; color: #333; overflow: hidden; }
.defs { display: block; width: 0; height: 0; }
.desktop { width: 1920px; height: 1080px; display: flex; flex-direction: column; overflow: hidden; }

/* Title bar */
.titlebar { height: 24px; flex: none; display: flex; align-items: center; background: linear-gradient(#5f5c52, #3c3b37); padding-left: 7px; }
.win-title { font-family: "Noto Sans", sans-serif; font-weight: 600; font-size: 14.7px; color: #dfdbd2; }
.indicators { margin-left: auto; display: flex; align-items: center; height: 24px; }
.ind { display: block; flex: none; }
.ind-discord { width: 22px; height: 17px; margin-right: 14px; }
.ind-net { width: 18px; height: 18px; margin-right: 12px; }
.ind-lang { width: 20px; height: 20px; background: #d6d3ca; color: #3c3b37; border-radius: 1px; font-family: "Noto Sans", sans-serif; font-weight: 600; font-size: 12px; text-align: center; line-height: 20px; margin-right: 13px; }
.ind-batt { width: 24px; height: 13px; margin-right: 12px; }
.ind-vol { width: 20px; height: 18px; margin-right: 12px; }
.clock { font-family: "Noto Sans", sans-serif; font-size: 14px; color: #dfdbd2; margin-right: 13px; width: 37px; }
.ind-gear { width: 18px; height: 18px; margin-right: 6px; }

.workspace { flex: 1; display: flex; min-height: 0; }

/* Launcher */
.launcher { width: 65px; flex: none; background: #3d0a39; border-right: 1px solid #6f5a6d; display: flex; flex-direction: column; gap: 7px; padding: 6px 0 6px 6px; }
.tile { width: 52px; height: 52px; border-radius: 5px; flex: none; position: relative; }
.tile svg { display: block; width: 52px; height: 52px; }
.tile-plain { background: linear-gradient(#6a3a66, #4f2049); }
.tile-ubuntu { background: linear-gradient(135deg, #a52a88, #7e1f6d); }
.tile-chrome { background: #b59b58; }
.tile-mysql { background: #3a73a8; }
.tile-terminal { background: #b94a4e; }
.tile-vscode { background: #4a8cc0; }
.tile-discord { background: #4a5cb0; }
.tile-trash { margin-top: auto; }
.running::before { content: ""; position: absolute; left: -6px; top: 21px; border-left: 5px solid #e8e4e8; border-top: 5px solid transparent; border-bottom: 5px solid transparent; }
.active::after { content: ""; position: absolute; right: -6px; top: 21px; border-right: 5px solid #e8e4e8; border-top: 5px solid transparent; border-bottom: 5px solid transparent; }

.browser { flex: 1; display: flex; flex-direction: column; min-width: 0; }

/* Tabs */
.tabstrip { height: 28px; flex: none; background: #c8c8c8; border-bottom: 1px solid #a3a3a3; padding-left: 7px; display: flex; font-family: "Noto Sans", sans-serif; font-size: 14.5px; color: #2c2c2c; }
.tab { width: 204px; height: 28px; margin-right: -11px; flex: none; position: relative; display: flex; align-items: center; padding: 0 0 0 15px; }
.tab-shape { position: absolute; left: 0; top: 0; width: 204px; height: 28px; fill: #cfcfcf; stroke: #9e9e9e; stroke-width: 1; }
.tab-active { z-index: 2; }
.tab-active .tab-shape { fill: #f2f2f2; }
.fav { width: 16px; height: 16px; flex: none; display: block; position: relative; }
.tab-title { position: relative; margin-left: 6px; width: 134px; overflow: hidden; white-space: nowrap; -webkit-mask-image: linear-gradient(to right, #000 82%, transparent 100%); mask-image: linear-gradient(to right, #000 82%, transparent 100%); }
.tab-x { position: relative; width: 10px; height: 10px; margin-left: 6px; flex: none; }
.newtab { width: 35px; height: 17px; margin: 8px 0 0 7px; flex: none; }
.profile { margin: 3px 5px 0 auto; width: 62px; height: 17px; border: 1px solid #a8a8a8; border-radius: 1px; text-align: center; line-height: 15px; font-size: 13px; color: #4e4e4e; text-shadow: 0 1px 0 #eee; }

.sf-text { font-family: "Liberation Serif", serif; font-style: italic; font-weight: 700; font-size: 12px; }
.mock-text { font-family: "Liberation Serif", serif; font-style: italic; font-weight: 700; font-size: 16px; }
.elo-text { font-family: "Liberation Sans", sans-serif; font-size: 7.5px; }
.lorem-text { font-family: "Liberation Serif", serif; font-size: 16px; }
.badge-text { font-family: "Liberation Sans", sans-serif; font-size: 9px; fill: #fff; }
.abp-text { font-family: "Liberation Sans", sans-serif; font-weight: 700; font-size: 7px; fill: #fff; }
.ub-text { font-family: "Liberation Sans", sans-serif; font-weight: 700; font-size: 7px; fill: #eee; }
.cors-text { font-family: "Liberation Sans", sans-serif; font-weight: 700; font-size: 6px; fill: #fff; }
.zt-text { font-family: "Liberation Sans", sans-serif; font-weight: 700; font-size: 9px; fill: #fff; }
.n-text { font-family: "Liberation Serif", serif; font-weight: 700; font-size: 13px; fill: #000; }
.az { font-family: "Liberation Sans", sans-serif; font-weight: 700; font-size: 30px; fill: #111; }

/* Toolbar */
.toolbar { height: 32px; flex: none; background: #f2f2f2; display: flex; align-items: center; padding: 5px 0 0 4px; }
.nav-btn { width: 28px; height: 27px; padding: 5px 6px; border: 0; background: none; flex: none; display: block; }
.nav-btn svg { display: block; width: 16px; height: 16px; }
.urlbox { flex: 1; height: 27px; margin: 0 1px 0 4px; background: #fff; border: 1px solid #a9a9a9; border-radius: 3px; display: flex; align-items: center; padding: 0 6px 0 5px; gap: 5px; }
.url-ic { width: 16px; height: 16px; flex: none; display: block; }
.url-ic + .url-ic { margin-left: 4px; }
.url { flex: 1; font-family: "Noto Sans", sans-serif; font-size: 13.7px; color: #757575; white-space: nowrap; }
.url b { font-weight: 400; color: #222; }
.ext { width: 32px; height: 27px; flex: none; display: flex; align-items: center; justify-content: center; }
.ext svg { width: 20px; height: 20px; display: block; }

/* Bookmarks */
.bookmarks { height: 31px; flex: none; background: #f2f2f2; border-bottom: 1px solid #a8a8a8; display: flex; align-items: center; padding-left: 8px; font-family: "Noto Sans", sans-serif; font-size: 14.8px; color: #222; }
.bm { display: flex; align-items: center; gap: 8px; margin-right: 13.4px; flex: none; white-space: nowrap; }
.bm-apps { gap: 10px; margin-right: 12px; }
.bm-short { margin-right: 11px; }
.fade { width: 113px; overflow: hidden; -webkit-mask-image: linear-gradient(to right, #000 80%, transparent 100%); mask-image: linear-gradient(to right, #000 80%, transparent 100%); }
.bm-right { margin-left: auto; padding-right: 14px; display: flex; align-items: center; }
.chev { width: 10px; font-size: 14px; color: #555; margin-right: 10px; text-align: center; }
.bm-sep { width: 1px; height: 18px; background: #cfcfcf; margin-right: 10px; }
.bm-other { margin-left: 8px; }

/* Page */
.viewport { flex: 1; display: flex; min-height: 0; }
.page { flex: 1; min-width: 0; display: flex; flex-direction: column; }
.page-content { flex: 1; min-height: 0; background: #fff; }
h1 { margin: 39px 0 233px; font-weight: 400; font-size: 36px; line-height: 40px; text-align: center; color: #333; }
.article-form { width: 740px; margin: 0 auto; }
.lbl { display: block; font-weight: 700; font-size: 14px; line-height: 20px; height: 20px; margin-bottom: 5px; color: #333; }

.cke { border: 1px solid #d1d1d1; }
.cke-top { background: #f8f8f8; border-bottom: 1px solid #d1d1d1; padding: 3px 0 5px 8px; height: 174px; }
.row { height: 33px; display: flex; align-items: center; }
.row-combo { margin-left: 1px; }
.btn { width: 28px; height: 26px; flex: none; display: flex; align-items: center; justify-content: center; color: #333; }
.ic { width: 16px; height: 16px; display: block; flex: none; }
.btn-off { opacity: .35; }
.btn-on { position: relative; background: #fff; box-shadow: inset 0 0 0 1px #bcbcbc; }
.btn-source { width: 69px; justify-content: flex-start; padding-left: 6px; gap: 3px; font-size: 12px; color: #474747; }
.btn-arrow { width: 36px; justify-content: flex-start; padding-left: 4px; gap: 3px; }
.btn-color { width: 34px; justify-content: flex-start; padding-left: 6px; gap: 3px; }
.btn-bg { width: 37px; justify-content: flex-start; padding-left: 6px; gap: 3px; }
.sep { width: 1px; height: 18px; margin: 0 2px; background: #bcbcbc; flex: none; display: block; }
.caret { display: block; width: 0; height: 0; border: 3px solid transparent; border-top-color: #474747; border-bottom: 0; flex: none; }
.combo { width: 92px; height: 26px; flex: none; display: flex; align-items: center; justify-content: space-between; padding: 0 9px 0 10px; font-size: 12px; color: #484848; }
.g { display: block; line-height: 16px; text-align: center; color: #333; }
.g-b { font-weight: 700; font-size: 15px; }
.g-i { font-family: "Liberation Serif", serif; font-style: italic; font-weight: 700; font-size: 16px; }
.g-u { font-weight: 700; font-size: 14px; text-decoration: underline; }
.g-s { font-weight: 700; font-size: 15px; text-decoration: line-through; }
.g-q { font-family: "Liberation Serif", serif; font-weight: 700; font-size: 32px; line-height: 26px; height: 16px; }
.g-o { font-family: "Liberation Serif", serif; font-weight: 700; font-size: 17px; }
.g-h { font-weight: 700; font-size: 18px; }
.ic-txt-s, .ic-txt-m, .ic-txt-abc, .ic-txt-div, .ic-txt-2, .ic-txt-p, .ic-txt-t, .ic-txt-a { font-family: "Liberation Sans", sans-serif; fill: #333; }
.ic-txt-s { font-size: 8px; font-weight: 700; }
.ic-txt-m { font-size: 10px; font-weight: 700; }
.ic-txt-abc { font-size: 7px; font-weight: 700; }
.ic-txt-div { font-size: 6.5px; font-weight: 700; }
.ic-txt-2 { font-size: 7px; font-weight: 700; }
.ic-txt-p { font-size: 13px; font-weight: 700; }
.ic-txt-t { font-family: "Liberation Serif", serif; font-size: 14px; font-weight: 700; font-style: italic; }
.ic-txt-a { font-size: 13px; font-weight: 700; }
.ic-txt-w { fill: #f8f8f8; }
.ic-txt-cjk { font-family: "Noto Sans CJK TC", sans-serif; font-size: 15px; fill: #474747; }

.cke-body { height: 200px; background: #fff; }
.cke-status { height: 27px; background: #f8f8f8; border-top: 1px solid #d1d1d1; display: flex; align-items: center; padding: 0 5px 0 12px; font-size: 11px; font-weight: 700; color: #484848; }
.crumb { margin-right: 10px; }
.resizer { width: 10px; height: 10px; margin: 9px 0 0 auto; display: block; }

.input { height: 34px; border: 1px solid #ccc; border-radius: 4px; box-shadow: inset 0 1px 1px rgba(0,0,0,.075); background: #fff; }
.create { display: block; width: 100%; height: 34px; margin-top: 39px; border: 1px solid #4cae4c; border-radius: 4px; background: #5cb85c; color: #fff; font: 400 14px "Liberation Sans", sans-serif; padding: 0; }

/* Symfony toolbar */
.sf-toolbar { height: 37px; flex: none; background: #222; border-top: 1px solid #bbb; display: flex; font-size: 13px; color: #f5f5f5; }
.sf-block { height: 36px; display: flex; align-items: center; flex: none; white-space: nowrap; }
.lab { color: #aaa; font-size: 11px; }
.sf-ic { display: block; width: 18px; height: 24px; margin-right: 8px; flex: none; }
.sf-status { width: 43px; background: #4f805d; justify-content: center; font-size: 14px; }
.sf-route { margin-left: 8px; gap: 4px; width: 101px; }
.sf-route .lab { font-size: 13px; }
.sf-time { width: 48px; gap: 3px; display: flex; }
.sf-mem { width: 56px; gap: 3px; display: flex; }
.sf-logs { width: 43px; }
.sf-warn { width: 54px; background: #a46a1f; padding-left: 11px; }
.sf-warn span { margin-left: 1px; color: #fff; }
.sf-form { width: 123px; padding-left: 12px; }
.sf-err { width: 54px; background: #b0413e; padding-left: 10px; }
.sf-user { width: 90px; padding-left: 12px; }
.sf-version { margin-left: auto; display: flex; align-items: center; gap: 8px; height: 36px; padding-right: 10px; font-size: 13px; color: #f5f5f5; }
.sf-logo { width: 18px; height: 18px; display: block; }
.sf-close { width: 36px; height: 36px; background: #444; flex: none; display: flex; align-items: center; justify-content: center; }
.sf-close svg { display: block; width: 16px; height: 16px; }
.sf-mini { font-family: "Noto Sans CJK SC", sans-serif; font-size: 7px; fill: #b0413e; }

/* Scrollbar */
.scrollbar { width: 15px; flex: none; background: #f1f1f1; display: flex; flex-direction: column; }
.sb-btn { height: 17px; flex: none; display: flex; align-items: center; justify-content: center; }
.sb-up { border: 4px solid transparent; border-bottom: 4px solid #505050; border-top: 0; display: block; }
.sb-down { border: 4px solid transparent; border-top: 4px solid #505050; border-bottom: 0; display: block; }
.sb-track { flex: 1; padding-top: 36px; }
.sb-thumb { height: 696px; background: #c1c1c1; }
```
